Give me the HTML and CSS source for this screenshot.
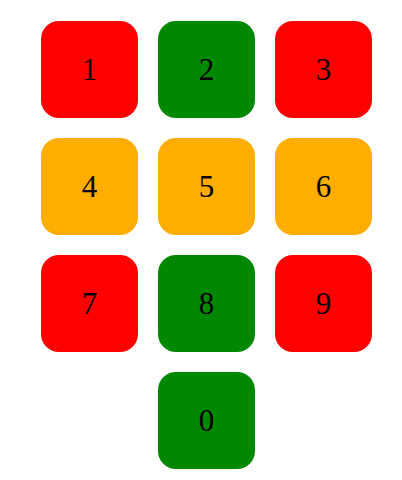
FILE: index.html
```html
<!DOCTYPE html>
<html>
<head>
<meta charset="utf-8">
<link rel="stylesheet" href="styles.css">
</head>
<body>
<div class="pad">
  <div class="key red">1</div>
  <div class="key green">2</div>
  <div class="key red">3</div>
  <div class="key orange">4</div>
  <div class="key orange">5</div>
  <div class="key orange">6</div>
  <div class="key red">7</div>
  <div class="key green">8</div>
  <div class="key red">9</div>
  <div class="key green zero">0</div>
</div>
</body>
</html>
```
FILE: styles.css
```css
html, body {
  margin: 0;
  padding: 0;
  background: #ffffff;
}
.pad {
  display: grid;
  grid-template-columns: repeat(3, 97px);
  grid-auto-rows: 97px;
  gap: 20px;
  padding: 21px 0 0 41px;
}
.key {
  display: flex;
  align-items: center;
  justify-content: center;
  border-radius: 18px;
  font-family: "Liberation Serif", serif;
  font-size: 31px;
  color: #000;
}
.red { background: #ff0000; }
.green { background: #008800; }
.orange { background: #ffad00; }
.zero { grid-column: 2; }
```
